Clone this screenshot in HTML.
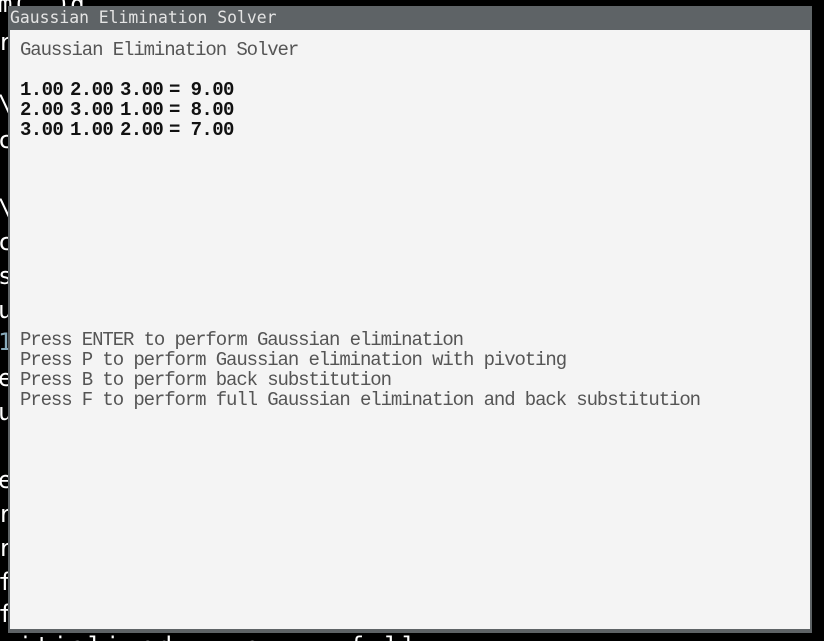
<!DOCTYPE html>
<html><head><meta charset="utf-8"><style>
html,body{margin:0;padding:0;width:824px;height:641px;overflow:hidden;}
body{background:#000;position:relative;font-family:"DejaVu Sans Mono","Liberation Mono",monospace;}
.bg{position:absolute;left:-2px;color:#fff;font-size:24px;line-height:24px;font-family:"DejaVu Sans Mono",monospace;white-space:pre;}
#win{position:absolute;left:8px;top:6px;width:804px;height:627px;background:#5e6366;}
#title{position:absolute;left:2px;top:2px;color:#e4e4e4;font-size:16.4px;line-height:20px;}
#content{position:absolute;left:2px;top:24px;width:800px;height:599px;background:#f4f4f4;}
.t{position:absolute;font-family:"Liberation Mono",monospace;font-size:19px;letter-spacing:-1.1px;line-height:20px;white-space:pre;color:#555;}
.n{color:#111;font-weight:bold;letter-spacing:-0.6px;}
</style></head><body>
<div class="bg" style="top:-8px">m(..)d</div>
<div class="bg" style="top:30px">r</div>
<div class="bg" style="top:92px">\</div>
<div class="bg" style="top:128px">c</div>
<div class="bg" style="top:196px">\</div>
<div class="bg" style="top:230px">c</div>
<div class="bg" style="top:264px">s</div>
<div class="bg" style="top:298px">u</div>
<div class="bg" style="top:330px;color:#8ab">1</div>
<div class="bg" style="top:366px">e</div>
<div class="bg" style="top:400px">u</div>
<div class="bg" style="top:468px">e</div>
<div class="bg" style="top:502px">r</div>
<div class="bg" style="top:536px">r</div>
<div class="bg" style="top:570px">f</div>
<div class="bg" style="top:602px">f</div>
<div class="bg" style="top:634px;left:18px;letter-spacing:3px">itialized    s     full</div>
<div id="win">
<div id="title">Gaussian Elimination Solver</div>
<div id="content">
<div class="t" style="left:10px;top:10px">Gaussian Elimination Solver</div>
<div class="t n" style="left:10px;top:50px">1.00</div><div class="t n" style="left:60px;top:50px">2.00</div><div class="t n" style="left:110px;top:50px">3.00</div><div class="t n" style="left:159px;top:50px">= 9.00</div>
<div class="t n" style="left:10px;top:70px">2.00</div><div class="t n" style="left:60px;top:70px">3.00</div><div class="t n" style="left:110px;top:70px">1.00</div><div class="t n" style="left:159px;top:70px">= 8.00</div>
<div class="t n" style="left:10px;top:90px">3.00</div><div class="t n" style="left:60px;top:90px">1.00</div><div class="t n" style="left:110px;top:90px">2.00</div><div class="t n" style="left:159px;top:90px">= 7.00</div>
<div class="t" style="left:10px;top:300px">Press ENTER to perform Gaussian elimination</div>
<div class="t" style="left:10px;top:320px">Press P to perform Gaussian elimination with pivoting</div>
<div class="t" style="left:10px;top:340px">Press B to perform back substitution</div>
<div class="t" style="left:10px;top:360px">Press F to perform full Gaussian elimination and back substitution</div>
</div>
</div>
</body></html>
